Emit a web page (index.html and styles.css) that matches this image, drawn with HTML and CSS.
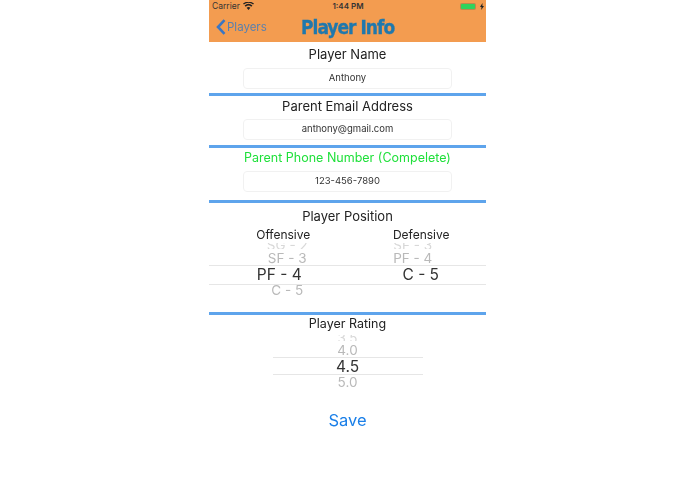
FILE: index.html
```html
<!DOCTYPE html>
<html lang="en">
<head>
<meta charset="utf-8">
<title>Player Info</title>
<link rel="stylesheet" href="styles.css">
</head>
<body>
<main class="phone">
  <header class="top">
    <div class="status">
      <div class="status-left">
        <span>Carrier</span>
        <svg class="wifi" width="11" height="8" viewBox="0 0 11 8"><path d="M5.5 8 3.6 5.7a3 3 0 0 1 3.8 0zM2.7 4.7 1.6 3.4a6 6 0 0 1 7.8 0L8.3 4.7a4.4 4.4 0 0 0-5.6 0zM.9 2.5 0 1.6a8.4 8.4 0 0 1 11 0l-.9.9a7 7 0 0 0-9.2 0z" fill="#222"/></svg>
      </div>
      <span class="clock">1:44 PM</span>
      <div class="status-right">
        <span class="battery"><span class="charge"></span></span>
        <svg width="4" height="7" viewBox="0 0 4 7"><path d="M2.5 0 0 4h1.5L1.2 7 4 3H2.4z" fill="#222"/></svg>
      </div>
    </div>
    <nav class="nav">
      <div class="back">
        <svg width="10" height="16" viewBox="0 0 10 16"><path d="M8.5 1.2 2 8l6.5 6.8" fill="none" stroke="#3a76c4" stroke-width="2.6"/></svg>
        <span>Players</span>
      </div>
      <h1 class="title">Player Info</h1>
    </nav>
  </header>

  <section class="block name">
    <h2 class="label">Player Name</h2>
    <div class="field field-a">Anthony</div>
  </section>
  <section class="block email">
    <h2 class="label">Parent Email Address</h2>
    <div class="field">anthony@gmail.com</div>
  </section>
  <section class="block phone-no">
    <h2 class="label ok">Parent Phone Number (Compelete)</h2>
    <div class="field">123-456-7890</div>
  </section>
  <section class="block position">
    <h2 class="label">Player Position</h2>
    <div class="pickers">
      <div class="col">
        <div class="col-head off-head">Offensive</div>
        <div class="wheel">
          <div class="row cut off-side">SG - 2</div>
          <div class="row side off-side">SF - 3</div>
          <div class="row now off-now">PF - 4</div>
          <div class="row next off-side">C - 5</div>
        </div>
      </div>
      <div class="col">
        <div class="col-head def-head">Defensive</div>
        <div class="wheel">
          <div class="row cut def-side">SF - 3</div>
          <div class="row side def-side">PF - 4</div>
          <div class="row now def-now">C - 5</div>
        </div>
      </div>
    </div>
  </section>
  <section class="rating">
    <h2 class="label rate-label">Player Rating</h2>
    <div class="wheel rate">
      <div class="row cut">3.5</div>
      <div class="row side">4.0</div>
      <div class="row now">4.5</div>
      <div class="row next">5.0</div>
    </div>
    <button class="save" type="button">Save</button>
  </section>
</main>
</body>
</html>
```
FILE: styles.css
```css
* { box-sizing: border-box; }
html, body { margin: 0; padding: 0; background: #fff; }
body { font-family: Inter, "Liberation Sans", sans-serif; color: #222; }
.phone { width: 277px; margin: 0 auto; filter: blur(0.35px); }

.top { height: 42px; background: #f39c50; padding: 0 2px 0 3px; }
.status { height: 12px; display: grid; grid-template-columns: 1fr auto 1fr; align-items: center; font-size: 8.5px; }
.status-left { display: flex; align-items: center; gap: 3px; color: #333; }
.clock { font-weight: 600; font-size: 8px; color: #333; }
.status-right { display: flex; justify-content: flex-end; align-items: center; gap: 4px; }
.battery { width: 16px; height: 7px; border-radius: 2px; background: #b98a4e; padding: 1px; display: block; }
.charge { display: block; height: 5px; background: #2fd35c; border-radius: 1px; }
.nav { height: 30px; display: flex; align-items: center; }
.back { width: 89px; display: flex; align-items: center; gap: 1px; padding-left: 4px; color: #5a80ae; font-size: 11.5px; }
.title { margin: 0; font-family: "DejaVu Sans", sans-serif; font-stretch: condensed; font-weight: bold; font-size: 19px; letter-spacing: -1px; -webkit-text-stroke: 0.3px #1f78ad; color: #1f78ad; white-space: nowrap; }

.block { text-align: center; border-bottom: 3px solid #5ea4ec; }
.name { height: 54px; padding-top: 4px; }
.email { height: 52px; padding-top: 2px; }
.phone-no { height: 55px; padding-top: 1px; }
.position { height: 112px; padding-top: 5px; }
.label { margin: 0; font-size: 13px; font-weight: normal; line-height: 17px; color: #222; }
.ok { color: #1fe03a; font-size: 12.5px; }
.rate-label { font-size: 12.5px; }
.field { width: 209px; height: 21px; margin: 4px auto 0; border: 1px solid #f1f1f1; border-radius: 4px; font-size: 9.5px; line-height: 18px; color: #333; }
.name .field { margin-top: 5px; }
.phone-no .field { margin-top: 5px; }

.pickers { display: flex; margin-top: 2px; }
.col { flex: 1; min-width: 0; }
.col-head { font-size: 12px; line-height: 16px; color: #222; }
.off-head { padding-left: 10px; }
.def-head { padding-left: 9px; }
.wheel { color: #b9b9b9; font-size: 13.5px; }
.row { height: 16px; line-height: 16px; }
.cut { height: 6px; line-height: 5px; overflow: hidden; color: #d8d8d8; }
.side { line-height: 18px; }
.now { height: 20px; line-height: 17px; font-size: 15.5px; color: #333; border-top: 1px solid #e6e6e6; border-bottom: 1px solid #e6e6e6; }
.next { line-height: 11px; }
.off-side { padding-left: 18px; }
.off-now { padding-left: 2px; }
.def-side { padding-right: 8px; }
.def-now { padding-left: 8px; }

.rating { text-align: center; }
.rate { width: 150px; margin: 3px auto 0; }
.rate .cut { line-height: 7px; }
.rate .now { height: 18px; line-height: 17px; }
.rate .next { line-height: 14px; }
.save { display: block; margin: 18px auto 0; padding: 0; border: 0; background: none; font: inherit; font-size: 16.5px; line-height: 22px; color: #1a7fe8; }
```
